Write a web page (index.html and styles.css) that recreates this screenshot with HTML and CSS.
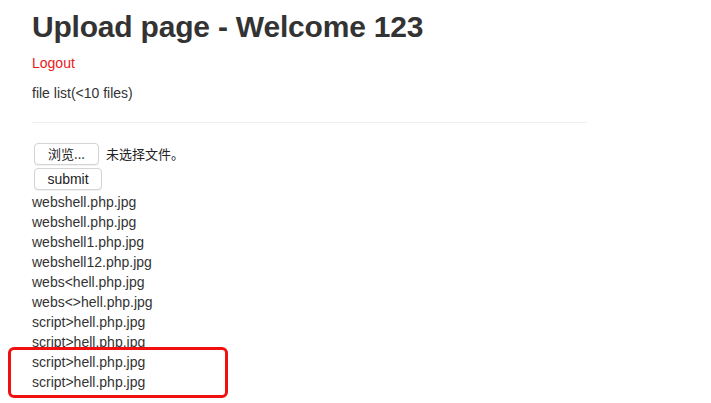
FILE: index.html
```html
<!DOCTYPE html>
<html lang="zh">
<head>
<meta charset="utf-8">
<title>Upload page</title>
<link rel="stylesheet" href="styles.css">
</head>
<body>
<div class="container">
  <h1 class="title">Upload page - Welcome 123</h1>
  <p class="logout"><a href="#">Logout</a></p>
  <p class="info">file list(&lt;10 files)</p>
  <hr class="rule">
  <form class="upload">
    <div class="file-row">
      <span class="btn btn-browse">浏览...</span>
      <span class="file-none">未选择文件。</span>
    </div>
    <div class="submit-row">
      <span class="btn btn-submit">submit</span>
    </div>
  </form>
  <div class="files">
    <div class="file">webshell.php.jpg</div>
    <div class="file">webshell.php.jpg</div>
    <div class="file">webshell1.php.jpg</div>
    <div class="file">webshell12.php.jpg</div>
    <div class="file">webs&lt;hell.php.jpg</div>
    <div class="file">webs&lt;&gt;hell.php.jpg</div>
    <div class="file">script&gt;hell.php.jpg</div>
    <div class="file">script&gt;hell.php.jpg</div>
    <div class="file">script&gt;hell.php.jpg</div>
    <div class="file">script&gt;hell.php.jpg</div>
  </div>
</div>
<div class="highlight"></div>
</body>
</html>
```
FILE: styles.css
```css
* { box-sizing: border-box; }
html, body { margin: 0; padding: 0; background: #fff; }
body {
  font-family: "Liberation Sans", Arial, "Noto Sans CJK SC", sans-serif;
  font-size: 14px;
  line-height: 20px;
  color: #333;
  position: relative;
  overflow: hidden;
  height: 403px;
}
.container {
  width: 555px;
  margin-left: 32px;
  padding-top: 8px;
}
.title {
  margin: 0;
  font-size: 30px;
  line-height: 38px;
  font-weight: bold;
  color: #333;
  letter-spacing: -0.2px;
}
.logout { margin: 7px 0 0; }
.logout a { color: #e8191b; text-decoration: none; }
.info { margin: 10px 0 0; }
.rule {
  margin: 19px 0 0;
  border: 0;
  border-top: 1px solid #eee;
  height: 0;
}
.upload { margin-top: 20px; }
.file-row, .submit-row {
  display: flex;
  align-items: center;
  gap: 7px;
}
.submit-row { margin-top: 3px; }
.btn {
  display: inline-flex;
  align-items: center;
  justify-content: center;
  height: 22px;
  margin-left: 2px;
  border: 1px solid #d4d4d4;
  border-radius: 4px;
  background: #fff;
  box-shadow: 0 1px 1px rgba(0,0,0,0.06);
  color: #222;
  font-size: 14px;
}
.btn-browse { width: 65px; font-family: "Noto Sans CJK SC", "Liberation Sans", sans-serif; font-size: 13px; }
.btn-submit { width: 68px; }
.file-none { font-family: "Noto Sans CJK SC", sans-serif; font-size: 13px; color: #222; }
.files { margin-top: 2px; }
.file { height: 20px; }
.highlight {
  position: absolute;
  left: 8px;
  top: 347px;
  width: 220px;
  height: 51px;
  border: 3px solid #f01010;
  border-radius: 6px;
}
```
